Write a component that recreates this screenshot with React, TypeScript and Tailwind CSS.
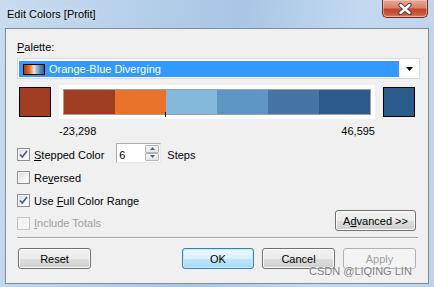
import React from "react";

const ramp = ["#9e3d22", "#e9722b", "#85b9dc", "#6096c4", "#4575a3", "#2b5b8a"];

export default function App() {
  return (
    <div className="relative w-[434px] h-[287px] overflow-hidden flex flex-col bg-[linear-gradient(100deg,#c9dcf0_0%,#b5cfe9_30%,#a8c6e5_50%,#c3d9ef_75%,#bcd4ec_100%)] font-['Liberation_Sans',Arial,sans-serif] text-[11px] leading-[14px] text-black">
      <div className="h-[28px] shrink-0 flex items-start">
        <span className="ml-[7px] mt-[7px] text-[11px] [text-shadow:0_0_6px_#eaf3fc]">Edit Colors [Profit]</span>
        <CloseButton />
      </div>

      <div className="mx-[5px] h-[256px] shrink-0 border border-[#7f8b99] bg-[#f0f0f0] pl-[11px] pt-[11px] flex flex-col">
        <div>
          <u>P</u>alette:
        </div>

        <div className="mt-[4px] w-[403px] h-[21px] border border-[#dadada] bg-white flex pl-[1px] pt-[2px]">
          <div className="w-[380px] h-[16px] bg-[#3399ff] flex items-center pl-[4px] text-white">
            <div className="w-[22px] h-[11px] border border-black bg-[linear-gradient(90deg,#9e3d22_0%,#e9722b_30%,#f4e6da_50%,#85b9dc_65%,#2b5b8a_100%)]" />
            <span className="ml-[4px]">Orange-Blue Diverging</span>
          </div>
          <div className="flex-1 flex items-center justify-center pb-[2px]">
            <svg width="7" height="4" viewBox="0 0 7 4">
              <path d="M0 0H7L3.5 4Z" fill="#000" />
            </svg>
          </div>
        </div>

        <div className="mt-[6px] ml-[2px] flex items-start">
          <div className="mt-[2px] w-[32px] h-[30px] border border-black bg-[#9e3d22]" />
          <div className="ml-[8px] w-[316px] h-[34px] bg-white p-[4px]">
            <div className="relative w-[308px] h-[26px] border border-[#a0a0a0] flex">
              {ramp.map((c) => (
                <div key={c} className="w-[51px] h-full" style={{ backgroundColor: c }} />
              ))}
              <div className="absolute left-[101px] bottom-[-3px] w-[1px] h-[5px] bg-black" />
            </div>
          </div>
          <div className="ml-[8px] mt-[2px] w-[32px] h-[30px] border border-black bg-[#2b5b8a]" />
        </div>

        <div className="mt-[5px] ml-[42px] w-[316px] flex justify-between">
          <span>-23,298</span>
          <span>46,595</span>
        </div>

        <div className="mt-[10px] h-[13px] flex items-center">
          <Check checked label={<><u>S</u>tepped Color</>} />
          <div className="ml-[12px] mb-[4px] w-[45px] h-[20px] border border-[#abadb3] border-r-[#e3e9ef] border-b-[#e3e9ef] bg-white flex">
            <span className="pl-[2px] pt-[4px] flex-1">6</span>
            <div className="w-[15px] flex flex-col py-[1px] pr-[1px]">
              <SpinHalf up />
              <SpinHalf />
            </div>
          </div>
          <span className="ml-[6px]">Steps</span>
        </div>

        <div className="mt-[10px] h-[13px] flex items-center">
          <Check label={<>Re<u>v</u>ersed</>} />
        </div>

        <div className="mt-[10px] h-[13px] flex items-center">
          <Check checked label={<>Use <u>F</u>ull Color Range</>} />
        </div>

        <div className="mt-[10px] w-[399px] h-[13px] flex items-end justify-between">
          <Check disabled label={<><u>I</u>nclude Totals</>} />
          <Button className="w-[81px] mb-[-1px]">
            A<u>d</u>vanced &gt;&gt;
          </Button>
        </div>

        <div className="mt-[7px] w-[401px] h-[2px] border-t border-[#a0a0a0] border-b border-b-white" />

        <div className="mt-[9px] w-[399px] flex">
          <Button className="ml-[1px] w-[73px]">Reset</Button>
          <div className="ml-auto flex gap-[8px]">
            <Button focused className="w-[72px]">OK</Button>
            <Button className="w-[73px]">Cancel</Button>
            <Button disabled className="w-[73px]">Apply</Button>
          </div>
        </div>
      </div>

      <div className="absolute left-[309px] top-[264px] text-[11px] leading-[14px] text-[#7a7a7a] [text-shadow:0_0_1px_#fff,0_0_2px_#fff]">
        CSDN @LIQING LIN
      </div>
    </div>
  );
}

function CloseButton() {
  return (
    <div className="ml-auto mr-[6px] w-[46px] h-[18px] rounded-b-[5px] border border-t-0 border-[#6e2a20] bg-[linear-gradient(180deg,#e9a795_0%,#d7826c_45%,#c2442b_55%,#cb5a3e_85%,#dd8a6f_100%)] flex items-center justify-center shadow-[inset_0_0_0_1px_rgba(255,220,210,0.5)]">
      <svg width="14" height="12" viewBox="0 0 14 12">
        <path d="M2.5 2L11.5 10M11.5 2L2.5 10" stroke="#3a3a3a" strokeWidth="4.2" strokeLinecap="round" />
        <path d="M2.5 2L11.5 10M11.5 2L2.5 10" stroke="#fff" strokeWidth="2.4" strokeLinecap="round" />
      </svg>
    </div>
  );
}

function Check({ checked, disabled, label }: { checked?: boolean; disabled?: boolean; label: React.ReactNode }) {
  return (
    <div className="flex items-center">
      <div
        className={
          disabled
            ? "w-[13px] h-[13px] border border-[#c4c4c4] bg-[#f4f4f4]"
            : "w-[13px] h-[13px] border border-[#8e8f8f] bg-[linear-gradient(135deg,#d9d9d9_0%,#f4f4f4_60%,#ffffff_100%)] shadow-[inset_0_0_0_1px_#f4f4f4] flex items-center justify-center"
        }
      >
        {checked && (
          <svg width="11" height="11" viewBox="0 0 11 11">
            <path d="M2 5.5L4.3 8L9 2" stroke="#4a5d86" strokeWidth="1.7" fill="none" />
          </svg>
        )}
      </div>
      <span className={disabled ? "ml-[4px] text-[#a0a0a0]" : "ml-[4px]"}>{label}</span>
    </div>
  );
}

function SpinHalf({ up }: { up?: boolean }) {
  return (
    <div className="flex-1 border border-[#b4b4b4] rounded-[1px] bg-[linear-gradient(180deg,#f7f7f7,#e4e4e4)] flex items-center justify-center">
      <svg width="5" height="3" viewBox="0 0 5 3">
        <path d={up ? "M0 3H5L2.5 0Z" : "M0 0H5L2.5 3Z"} fill="#4d6185" />
      </svg>
    </div>
  );
}

function Button({
  children,
  className,
  focused,
  disabled,
}: {
  children: React.ReactNode;
  className?: string;
  focused?: boolean;
  disabled?: boolean;
}) {
  const base = "h-[21px] rounded-[3px] border flex items-center justify-center ";
  const look = disabled
    ? "border-[#adb2b5] bg-[#f4f4f4] text-[#a0a0a0]"
    : focused
      ? "border-[#3c7fb1] bg-[linear-gradient(180deg,#eaf6fd_0%,#d9f0fc_50%,#bee6fd_51%,#a7d9f5_100%)] shadow-[inset_0_0_0_1px_#c4e8fd]"
      : "border-[#707070] bg-[linear-gradient(180deg,#f2f2f2_0%,#ebebeb_50%,#dddddd_51%,#cfcfcf_100%)] shadow-[inset_0_0_0_1px_#fcfcfc]";
  return <div className={base + look + " " + (className ?? "")}>{children}</div>;
}
